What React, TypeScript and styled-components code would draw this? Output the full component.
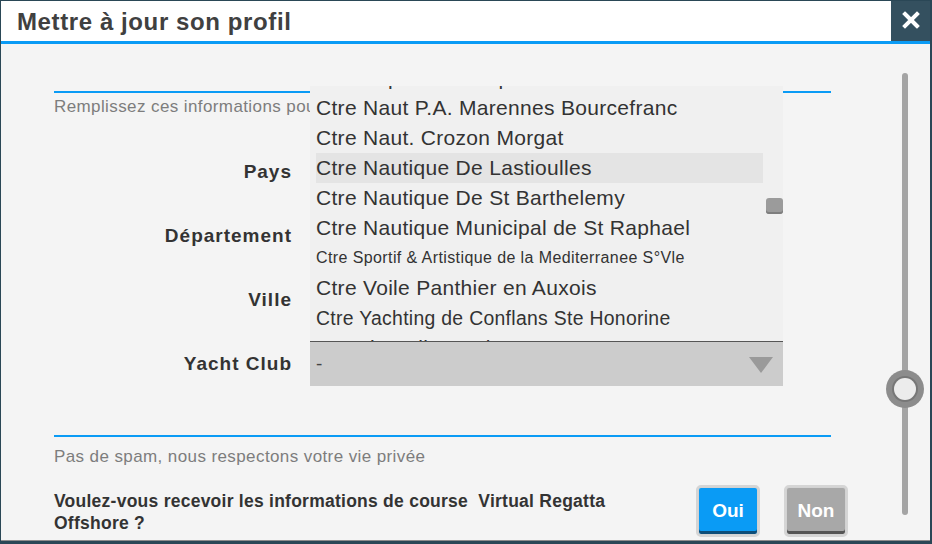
import styled, { createGlobalStyle } from 'styled-components'

const GlobalStyle = createGlobalStyle`
    html, body {
        margin: 0;
        padding: 0;
        background: #2a4756;
        font-family: "Liberation Sans", Arial, sans-serif;
    }
`

const clubs = [
    { label: "Ctre Espace Nautique Marseillan" },
    { label: "Ctre Naut P.A. Marennes Bourcefranc" },
    { label: "Ctre Naut. Crozon Morgat" },
    { label: "Ctre Nautique De Lastioulles", active: true },
    { label: "Ctre Nautique De St Barthelemy" },
    { label: "Ctre Nautique Municipal de St Raphael" },
    { label: "Ctre Sportif & Artistique de la Mediterranee S°Vle", size: 16 },
    { label: "Ctre Voile Panthier en Auxois" },
    { label: "Ctre Yachting de Conflans Ste Honorine", size: 19.4 },
    { label: "Ctre de Voile Dunkerque" },
]

const fields = ["Pays", "Département", "Ville"]

const App = () => {
    return <>
        <GlobalStyle />
        <Dialog>
            <Header>
                <Title>Mettre à jour son profil</Title>
                <CloseButton aria-label="Fermer">
                    <svg width="18" height="18" viewBox="0 0 18 18">
                        <path d="M3 3 L15 15 M15 3 L3 15" stroke="#fff" strokeWidth="4" strokeLinecap="square" />
                    </svg>
                </CloseButton>
            </Header>
            <Body>
                <Content>
                    <Divider />
                    <Hint>Remplissez ces informations pour personnaliser votre expérience de jeu</Hint>
                    <Form>
                        {fields.map(f => <Row key={f}>
                            <Label>{f}</Label>
                            <Select><span>-</span><Arrow /></Select>
                        </Row>)}
                        <Row>
                            <Label>Yacht Club</Label>
                            <SelectWrap>
                                <Select><span>-</span><Arrow /></Select>
                                <OptionList>
                                    <Options>
                                        {clubs.map(c => <Option key={c.label} $active={c.active} $size={c.size}>{c.label}</Option>)}
                                    </Options>
                                    <ListThumb />
                                </OptionList>
                            </SelectWrap>
                        </Row>
                    </Form>
                    <Divider $bottom />
                    <Hint $tight>Pas de spam, nous respectons votre vie privée</Hint>
                    <Question>
                        <QuestionText>Voulez-vous recevoir les informations de course&nbsp; Virtual Regatta Offshore ?</QuestionText>
                        <Actions>
                            <ChoiceButton $primary>Oui</ChoiceButton>
                            <ChoiceButton>Non</ChoiceButton>
                        </Actions>
                    </Question>
                </Content>
                <RailArea>
                    <Track>
                        <Knob />
                    </Track>
                </RailArea>
            </Body>
        </Dialog>
    </>
}

export default App

const Dialog = styled.div`
    margin: 1px 2px 0 1px;
    height: 540px;
    display: flex;
    flex-direction: column;
    background: #f4f4f4;
    border-bottom: 1px solid #8d8d8d;
    box-sizing: border-box;
    overflow: hidden;
`

const Header = styled.div`
    height: 40px;
    flex: none;
    display: flex;
    align-items: center;
    background: #fff;
    border-bottom: 3px solid #0a9bf5;
`

const Title = styled.h1`
    flex: 1;
    margin: 2px 0 0 16px;
    font-size: 24px;
    font-weight: bold;
    color: #404040;
    letter-spacing: 0.6px;
`

const CloseButton = styled.button`
    width: 39px;
    height: 42px;
    margin-top: -2px;
    border: none;
    padding: 0;
    background: #34505f;
    display: flex;
    align-items: center;
    justify-content: center;
`

const Body = styled.div`
    flex: 1;
    display: flex;
`

const Content = styled.div`
    flex: none;
    width: 777px;
    padding: 47px 0 0 53px;
`

const Divider = styled.div<{ $bottom?: boolean }>`
    height: 2px;
    background: #0a9bf5;
    margin-top: ${p => p.$bottom ? '49px' : '0'};
`

const Hint = styled.p<{ $tight?: boolean }>`
    margin: ${p => p.$tight ? '10px' : '4px'} 0 0;
    font-size: 17px;
    letter-spacing: 0.4px;
    line-height: 20px;
    color: #7d7d7d;
    white-space: nowrap;
`

const Form = styled.div`
    margin-top: 32px;
    display: flex;
    flex-direction: column;
    gap: 19px;
`

const Row = styled.div`
    display: grid;
    grid-template-columns: 238px 473px;
    column-gap: 18px;
    align-items: center;
    height: 45px;
`

const Label = styled.div`
    text-align: right;
    font-size: 19px;
    font-weight: bold;
    color: #333;
    letter-spacing: 1px;
    padding-top: 1px;
`

const SelectWrap = styled.div`
    position: relative;
`

const Select = styled.div`
    height: 45px;
    box-sizing: border-box;
    display: flex;
    align-items: center;
    justify-content: space-between;
    padding: 0 10px 0 6px;
    background: #cccccc;
    font-size: 19px;
    color: #444;
`

const Arrow = styled.span`
    width: 0;
    height: 0;
    border-left: 12px solid transparent;
    border-right: 12px solid transparent;
    border-top: 16px solid #9a9a9a;
    margin-top: 2px;
`

const OptionList = styled.div`
    position: absolute;
    left: 0;
    right: 0;
    bottom: 100%;
    height: 255px;
    overflow: hidden;
    background: #f0f0f0;
    box-shadow: 0 1px 0 #555;
    padding: 0 20px 0 6px;
`

const Options = styled.div`
    margin-top: -23px;
`

const Option = styled.div<{ $active?: boolean; $size?: number }>`
    height: 30px;
    line-height: 30px;
    white-space: nowrap;
    font-size: ${p => p.$size ?? 21}px;
    letter-spacing: ${p => p.$size === 16 ? '0.4px' : '0.3px'};
    color: #333;
    background: ${p => p.$active ? '#e4e4e4' : 'transparent'};
`

const ListThumb = styled.div`
    position: absolute;
    right: 0;
    top: 112px;
    width: 17px;
    height: 16px;
    border-radius: 3px;
    background: #9b9b9b;
    box-shadow: inset 0 -2px 0 #7e7e7e;
`

const Question = styled.div`
    margin-top: 19px;
    display: flex;
    align-items: center;
`

const QuestionText = styled.p`
    margin: 2px 0 0;
    width: 600px;
    flex: none;
    font-size: 17.5px;
    letter-spacing: 0.25px;
    line-height: 22px;
    font-weight: bold;
    color: #333;
`

const Actions = styled.div`
    margin-left: 43px;
    display: flex;
    gap: 26px;
`

const ChoiceButton = styled.button<{ $primary?: boolean }>`
    width: 62px;
    height: 50px;
    padding: 0;
    border: 2px solid #d2d2d2;
    border-radius: 4px;
    display: flex;
    align-items: center;
    justify-content: center;
    font-family: "Liberation Sans", Arial, sans-serif;
    color: #fff;
    font-size: 19px;
    font-weight: bold;
    background: ${p => p.$primary ? '#0a9bf5' : '#a8a8a8'};
    box-shadow: inset 0 -3px 0 ${p => p.$primary ? '#0c4d78' : '#555'};
    outline: 2px solid #d5d5d5;
    outline-offset: -1px;
`

const RailArea = styled.div`
    flex: 1;
    padding: 29px 0 25px 71px;
    display: flex;
`

const Track = styled.div`
    position: relative;
    width: 6px;
    border-radius: 3px;
    background: #a4a4a4;
`

const Knob = styled.div`
    position: absolute;
    left: 50%;
    top: 316px;
    width: 38px;
    height: 38px;
    margin: -19px 0 0 -19px;
    border-radius: 50%;
    background: #8c8c8c;
    box-sizing: border-box;
    display: flex;
    align-items: center;
    justify-content: center;
    &::after {
        content: "";
        width: 22px;
        height: 22px;
        border-radius: 50%;
        background: #ececec;
        box-shadow: 0 0 0 2px #777;
    }
`
